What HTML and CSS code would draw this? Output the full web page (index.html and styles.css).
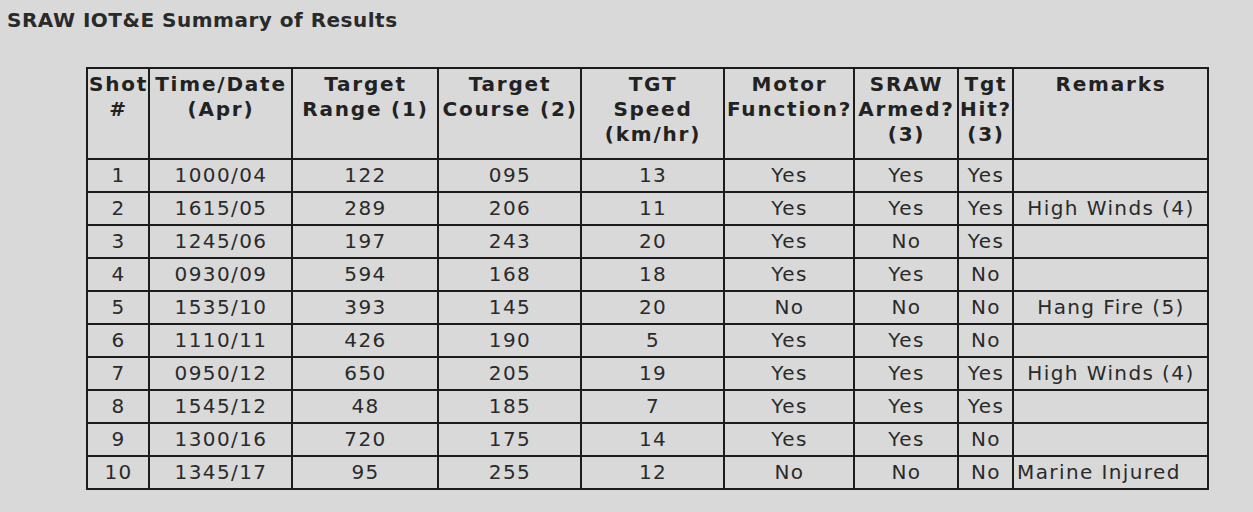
FILE: index.html
```html
<!DOCTYPE html>
<html>
<head>
<meta charset="utf-8">
<link rel="stylesheet" href="styles.css">
</head>
<body>
<div class="page">
  <h1 class="title">SRAW IOT&amp;E Summary of Results</h1>
  <table class="results">
    <colgroup>
      <col class="c-shot">
      <col class="c-time">
      <col class="c-range">
      <col class="c-course">
      <col class="c-speed">
      <col class="c-motor">
      <col class="c-armed">
      <col class="c-hit">
      <col class="c-remarks">
    </colgroup>
    <thead>
      <tr>
        <th>Shot<br>#</th>
        <th>Time/Date<br>(Apr)</th>
        <th>Target<br>Range (1)</th>
        <th>Target<br>Course (2)</th>
        <th>TGT<br>Speed<br>(km/hr)</th>
        <th>Motor<br>Function?</th>
        <th>SRAW<br>Armed?<br>(3)</th>
        <th>Tgt<br>Hit?<br>(3)</th>
        <th>Remarks</th>
      </tr>
    </thead>
    <tbody>
      <tr><td>1</td><td>1000/04</td><td>122</td><td>095</td><td>13</td><td>Yes</td><td>Yes</td><td>Yes</td><td></td></tr>
      <tr><td>2</td><td>1615/05</td><td>289</td><td>206</td><td>11</td><td>Yes</td><td>Yes</td><td>Yes</td><td>High Winds (4)</td></tr>
      <tr><td>3</td><td>1245/06</td><td>197</td><td>243</td><td>20</td><td>Yes</td><td>No</td><td>Yes</td><td></td></tr>
      <tr><td>4</td><td>0930/09</td><td>594</td><td>168</td><td>18</td><td>Yes</td><td>Yes</td><td>No</td><td></td></tr>
      <tr><td>5</td><td>1535/10</td><td>393</td><td>145</td><td>20</td><td>No</td><td>No</td><td>No</td><td>Hang Fire (5)</td></tr>
      <tr><td>6</td><td>1110/11</td><td>426</td><td>190</td><td>5</td><td>Yes</td><td>Yes</td><td>No</td><td></td></tr>
      <tr><td>7</td><td>0950/12</td><td>650</td><td>205</td><td>19</td><td>Yes</td><td>Yes</td><td>Yes</td><td>High Winds (4)</td></tr>
      <tr><td>8</td><td>1545/12</td><td>48</td><td>185</td><td>7</td><td>Yes</td><td>Yes</td><td>Yes</td><td></td></tr>
      <tr><td>9</td><td>1300/16</td><td>720</td><td>175</td><td>14</td><td>Yes</td><td>Yes</td><td>No</td><td></td></tr>
      <tr><td>10</td><td>1345/17</td><td>95</td><td>255</td><td>12</td><td>No</td><td>No</td><td>No</td><td class="left">Marine Injured</td></tr>
    </tbody>
  </table>
</div>
</body>
</html>
```
FILE: styles.css
```css
html, body {
  margin: 0;
  padding: 0;
  background: #d9d9d9;
}
.page {
  width: 1253px;
  height: 512px;
  background: #d9d9d9;
  font-family: "DejaVu Sans", Verdana, sans-serif;
  color: #262626;
  padding: 8px 0 0 7px;
  box-sizing: border-box;
}
.title {
  margin: 0;
  font-size: 20px;
  font-weight: bold;
  line-height: 24px;
  letter-spacing: 0.5px;
  color: #2a2a2a;
}
.results {
  margin: 35px 0 0 79px;
  border-collapse: collapse;
  table-layout: fixed;
  width: 1121px;
  font-size: 20px;
}
.c-shot { width: 62px; }
.c-time { width: 143px; }
.c-range { width: 146px; }
.c-course { width: 143px; }
.c-speed { width: 143px; }
.c-motor { width: 130px; }
.c-armed { width: 104px; }
.c-hit { width: 55px; }
.c-remarks { width: 195px; }
.results th,
.results td {
  border: 2px solid #1c1c1c;
  text-align: center;
  padding: 0;
  white-space: nowrap;
}
.results th {
  height: 86px;
  vertical-align: top;
  padding-top: 3px;
  padding-left: 1px;
  line-height: 25px;
  font-weight: bold;
  letter-spacing: 1.8px;
  color: #222;
}
.results td {
  height: 31px;
  line-height: 31px;
  vertical-align: middle;
  padding-left: 1px;
  letter-spacing: 1.4px;
  color: #2a2a2a;
}
.results td.left {
  text-align: left;
  padding-left: 3px;
}
```
